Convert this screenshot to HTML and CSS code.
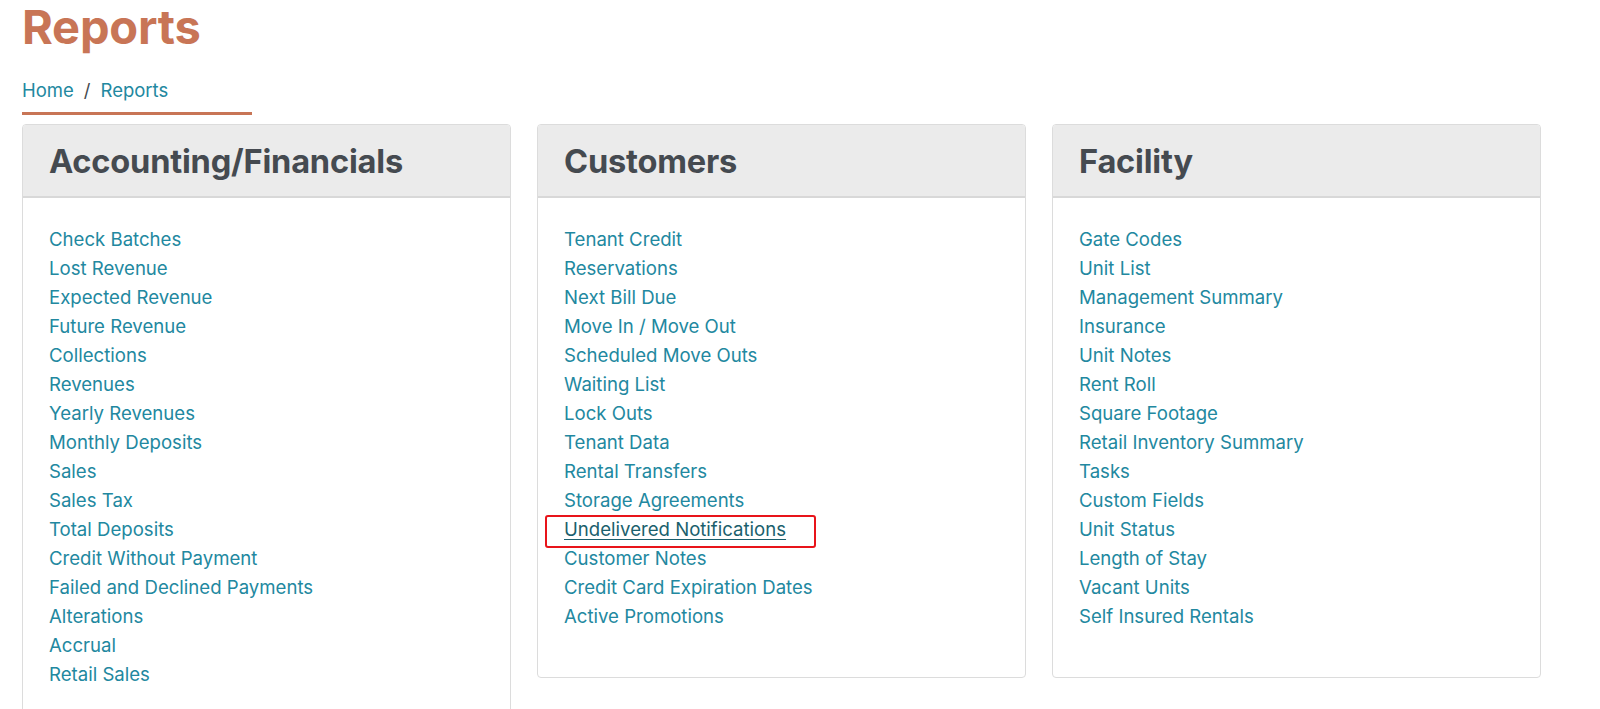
FILE: index.html
```html
<!DOCTYPE html>
<html lang="en">
<head>
<meta charset="utf-8">
<title>Reports</title>
<link rel="stylesheet" href="styles.css">
</head>
<body>
<div class="page">
  <h1 class="title">Reports</h1>
  <nav class="crumbs">
    <a href="#">Home</a><span class="sep">/</span><a href="#">Reports</a>
  </nav>
  <div class="cards">
    <section class="card">
      <header class="card-head"><h2>Accounting/Financials</h2></header>
      <ul class="links">
        <li><a href="#">Check Batches</a></li>
        <li><a href="#">Lost Revenue</a></li>
        <li><a href="#">Expected Revenue</a></li>
        <li><a href="#">Future Revenue</a></li>
        <li><a href="#">Collections</a></li>
        <li><a href="#">Revenues</a></li>
        <li><a href="#">Yearly Revenues</a></li>
        <li><a href="#">Monthly Deposits</a></li>
        <li><a href="#">Sales</a></li>
        <li><a href="#">Sales Tax</a></li>
        <li><a href="#">Total Deposits</a></li>
        <li><a href="#">Credit Without Payment</a></li>
        <li><a href="#">Failed and Declined Payments</a></li>
        <li><a href="#">Alterations</a></li>
        <li><a href="#">Accrual</a></li>
        <li><a href="#">Retail Sales</a></li>
      </ul>
    </section>
    <section class="card">
      <header class="card-head"><h2>Customers</h2></header>
      <ul class="links">
        <li><a href="#">Tenant Credit</a></li>
        <li><a href="#">Reservations</a></li>
        <li><a href="#">Next Bill Due</a></li>
        <li><a href="#">Move In / Move Out</a></li>
        <li><a href="#">Scheduled Move Outs</a></li>
        <li><a href="#">Waiting List</a></li>
        <li><a href="#">Lock Outs</a></li>
        <li><a href="#">Tenant Data</a></li>
        <li><a href="#">Rental Transfers</a></li>
        <li><a href="#">Storage Agreements</a></li>
        <li class="marked"><a href="#" class="hover">Undelivered Notifications</a></li>
        <li><a href="#">Customer Notes</a></li>
        <li><a href="#">Credit Card Expiration Dates</a></li>
        <li><a href="#">Active Promotions</a></li>
      </ul>
    </section>
    <section class="card">
      <header class="card-head"><h2>Facility</h2></header>
      <ul class="links">
        <li><a href="#">Gate Codes</a></li>
        <li><a href="#">Unit List</a></li>
        <li><a href="#">Management Summary</a></li>
        <li><a href="#">Insurance</a></li>
        <li><a href="#">Unit Notes</a></li>
        <li><a href="#">Rent Roll</a></li>
        <li><a href="#">Square Footage</a></li>
        <li><a href="#">Retail Inventory Summary</a></li>
        <li><a href="#">Tasks</a></li>
        <li><a href="#">Custom Fields</a></li>
        <li><a href="#">Unit Status</a></li>
        <li><a href="#">Length of Stay</a></li>
        <li><a href="#">Vacant Units</a></li>
        <li><a href="#">Self Insured Rentals</a></li>
      </ul>
    </section>
  </div>
</div>
</body>
</html>
```

FILE: styles.css
```css
* { box-sizing: border-box; }
html, body { margin: 0; padding: 0; background: #fff; }
body {
  font-family: Inter, "Liberation Sans", Arial, sans-serif;
  color: #454a50;
}
.page {
  padding: 0 58px 0 22px;
}
.title {
  margin: 0;
  padding-top: 0;
  font-size: 47px;
  line-height: 54px;
  font-weight: 700;
  color: #c87556;
  letter-spacing: -0.2px;
}
.crumbs {
  margin-top: 24px;
  width: 230px;
  padding-bottom: 10px;
  border-bottom: 3px solid #c87556;
  font-size: 18.5px;
  line-height: 24px;
}
.crumbs a { color: #2288a0; text-decoration: none; }
.crumbs .sep { color: #454a50; margin: 0 10px; }
.cards {
  margin-top: 9px;
  display: grid;
  grid-template-columns: repeat(3, 489px);
  column-gap: 26px;
  align-items: start;
}
.card {
  border: 1px solid #dcdcdc;
  border-radius: 4px;
  background: #fff;
  overflow: hidden;
}
.card-head {
  background: #ebebeb;
  border-bottom: 2px solid #d8d8d8;
  height: 73px;
  padding: 0 26px;
  display: flex;
  align-items: center;
}
.card-head h2 {
  margin: 0;
  font-size: 32.6px;
  font-weight: 700;
  color: #454a50;
  letter-spacing: -0.2px;
}
.links {
  list-style: none;
  margin: 0;
  padding: 27px 26px 46px;
}
.links li {
  font-size: 18.6px;
  line-height: 29px;
}
.links a {
  color: #2288a0;
  text-decoration: none;
}
.links li.marked { position: relative; }
.links li.marked::after {
  content: "";
  position: absolute;
  left: -19px;
  top: 0;
  width: 267px;
  height: 29px;
  border: 2px solid #e8141a;
  border-radius: 3px;
}
.links a.hover {
  color: #1b5f6d;
  text-decoration: underline;
  text-underline-offset: 3px;
}
```
